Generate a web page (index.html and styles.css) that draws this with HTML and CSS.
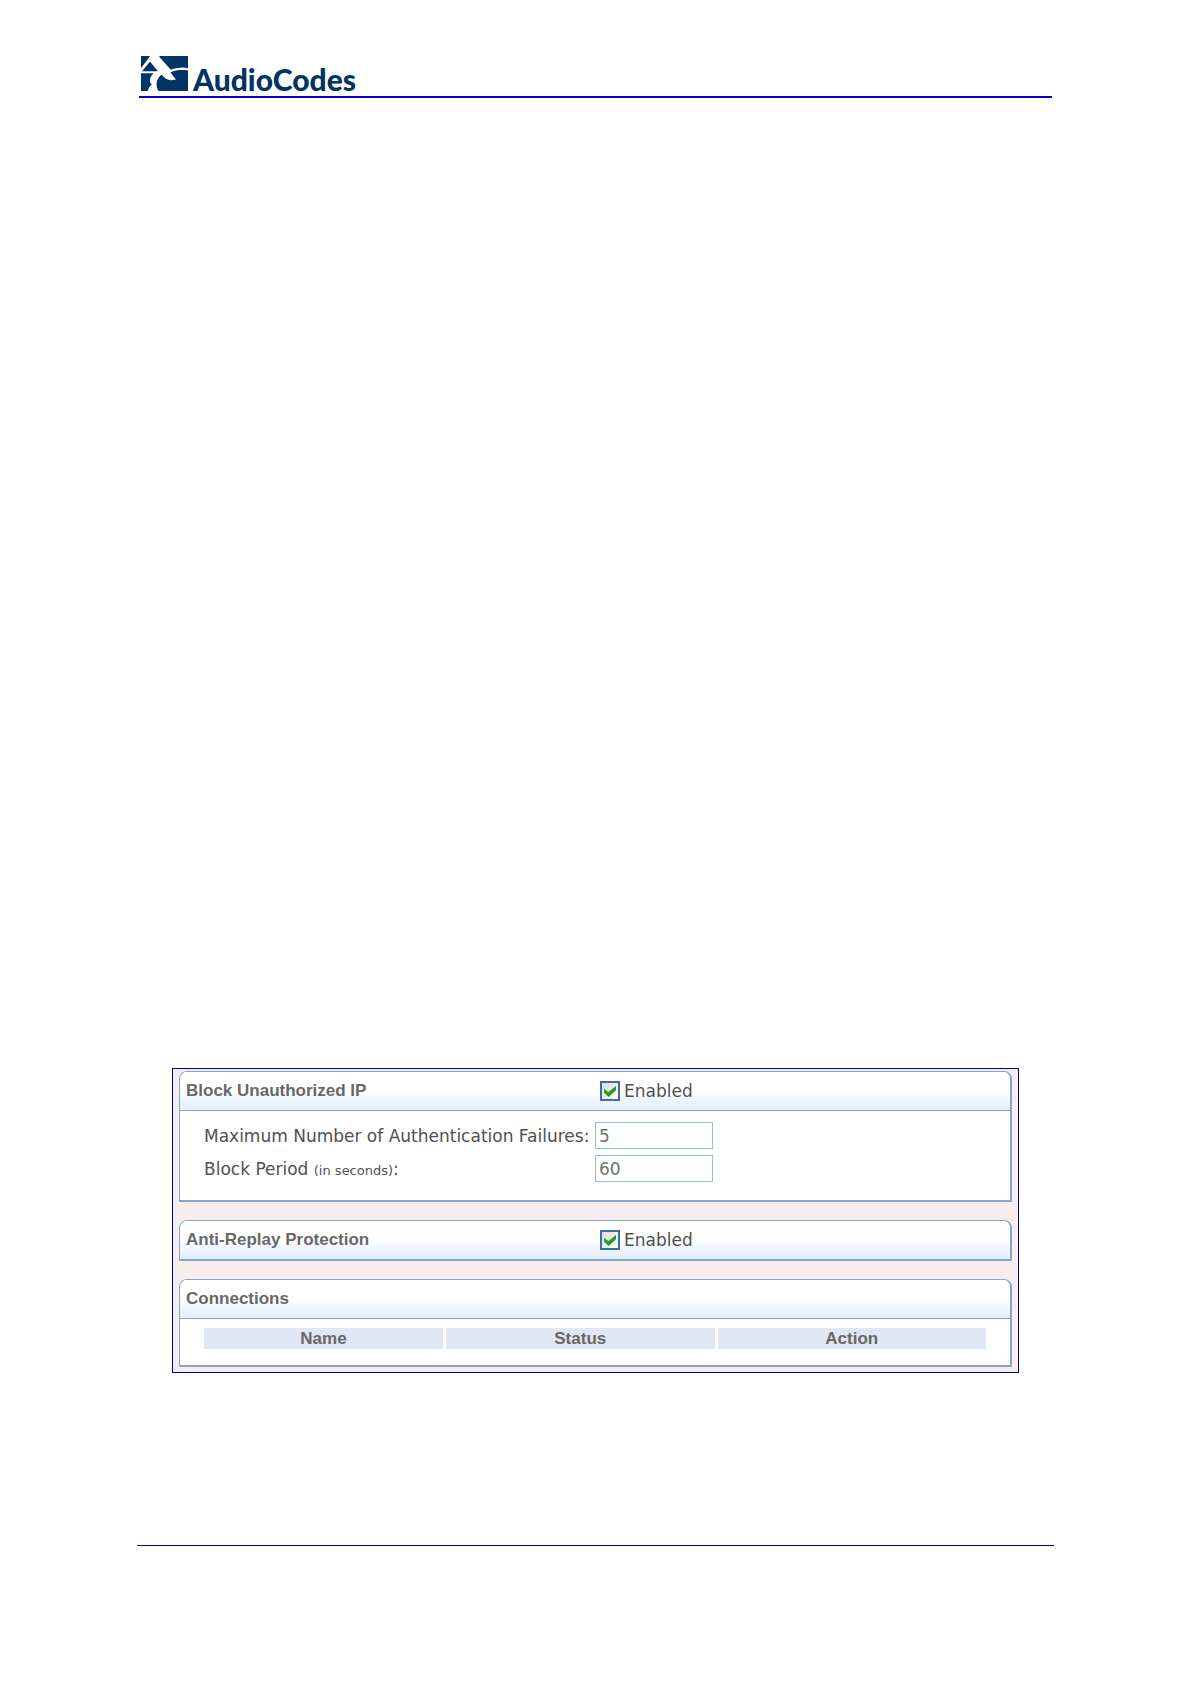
FILE: index.html
```html
<!DOCTYPE html>
<html lang="en">
<head>
  <meta charset="UTF-8">
  <meta name="viewport" content="width=device-width, initial-scale=1.0">
  <title>AudioCodes</title>
  <link rel="stylesheet" href="styles.css">
</head>
<body>
  <header class="page-header">
    <svg class="logo-mark" viewBox="0 0 140 104" aria-hidden="true">
      <path d="M0 0H27L0 36Z"/>
      <path d="M27 16L50 45H3Z"/>
      <path d="M54 0H140V36C122 32 104 35 89 41L56 4Z"/>
      <path d="M0 51H38C27 60 22 74 32 85C26 90 22 97 20 104H0Z"/>
      <path d="M52 104C42 88 46 66 61 56L74 68C82 73 92 73 104 70L88 49C104 41 122 41 140 43V104Z"/>
    </svg>
    <span class="logo-text">AudioCodes</span>
  </header>

  <main class="content">
    <form class="panel">
      <section class="card">
        <div class="card-header">
          <h2>Block Unauthorized IP</h2>
          <label class="toggle"><input type="checkbox" checked> Enabled</label>
        </div>
        <div class="card-body">
          <div class="field">
            <label for="maxFailures">Maximum Number of Authentication Failures:</label>
            <input type="text" id="maxFailures" value="5">
          </div>
          <div class="field">
            <label for="blockPeriod">Block Period <small>(in seconds)</small>:</label>
            <input type="text" id="blockPeriod" value="60">
          </div>
        </div>
      </section>

      <section class="card">
        <div class="card-header">
          <h2>Anti-Replay Protection</h2>
          <label class="toggle"><input type="checkbox" checked> Enabled</label>
        </div>
      </section>

      <section class="card">
        <div class="card-header">
          <h2>Connections</h2>
        </div>
        <div class="table-wrap">
          <table>
            <thead>
              <tr>
                <th class="col-name">Name</th>
                <th>Status</th>
                <th>Action</th>
              </tr>
            </thead>
          </table>
        </div>
      </section>
    </form>
  </main>

  <footer class="page-footer"></footer>
</body>
</html>
```

FILE: styles.css
```css
* {
  box-sizing: border-box;
  margin: 0;
  padding: 0;
}

body {
  min-height: 100vh;
  padding: 56px 136px 138px 137px;
  display: flex;
  flex-direction: column;
  background: #fff;
  color: #505050;
  font-family: Verdana, "DejaVu Sans", sans-serif;
  font-size: 17px;
}

/* Header */
.page-header {
  display: flex;
  align-items: flex-start;
  gap: 5px;
  height: 42px;
  margin: 0 2px;
  padding-left: 2px;
  border-bottom: 2px solid #0000d0;
}

.logo-mark {
  width: 47px;
  height: 35px;
  fill: #003366;
}

.logo-text {
  color: #003366;
  font-family: Lato, sans-serif;
  font-size: 30px;
  font-weight: 900;
  line-height: 46px;
}

/* Main area */
.content {
  flex: 1;
  display: flex;
  flex-direction: column;
  justify-content: flex-end;
  padding: 0 35px 172px;
}

.panel {
  display: flex;
  flex-direction: column;
  gap: 18px;
  padding: 2px 6px 5px;
  border: 1px solid #0000a0;
  background: #f7eded;
}

.card {
  border: 1px solid #85a5c9;
  border-width: 1px 2px 2px 1px;
  border-radius: 8px 8px 0 0;
  background: #fff;
}

.card-header {
  display: grid;
  grid-template-columns: 1fr 1fr;
  align-items: center;
  height: 38px;
  border-radius: 7px 7px 0 0;
  background: linear-gradient(#fff 55%, #eff6fe 70%, #e3edfb);
}

.card-header h2 {
  padding-left: 6px;
  color: #686868;
  font-family: "Liberation Sans", Arial, sans-serif;
  font-size: 17px;
  white-space: nowrap;
}

.toggle {
  display: flex;
  align-items: center;
  gap: 4px;
  padding-left: 5px;
}

.toggle input {
  appearance: none;
  width: 20px;
  height: 20px;
  padding: 3px 2px;
  border: 2px solid #3c6ea5;
  background: linear-gradient(135deg, #dcdcdc, #fff);
}

/* green tick */
.toggle input:checked::before {
  content: "";
  display: block;
  width: 12px;
  height: 11px;
  background: #21a121;
  clip-path: polygon(0 25%, 36% 55%, 100% 0, 100% 38%, 38% 100%, 0 62%);
}

.card-body {
  display: flex;
  flex-direction: column;
  gap: 6px;
  padding: 11px 0 18px;
  border-top: 1px solid #85a5c9;
}

.field {
  display: grid;
  grid-template-columns: 1fr 1fr;
  align-items: center;
}

.field label {
  padding-left: 24px;
  white-space: nowrap;
}

.field small {
  font-size: 13px;
}

.field input {
  width: 118px;
  height: 27px;
  padding: 0 3px;
  border: 1px solid #9db5e0;
  color: #707070;
  font: inherit;
}

/* Connections table */
.table-wrap {
  padding: 6px 21px 13px;
  border-top: 1px solid #85a5c9;
}

table {
  width: 100%;
  border-collapse: separate;
  border-spacing: 3px;
  table-layout: fixed;
}

th {
  height: 21px;
  background: #dfe6f4;
  color: #686868;
  font-family: "Liberation Sans", Arial, sans-serif;
  font-size: 17px;
  line-height: 21px;
}

.col-name {
  width: 239px;
}

/* Footer */
.page-footer {
  border-top: 1px solid #000080;
}
```
